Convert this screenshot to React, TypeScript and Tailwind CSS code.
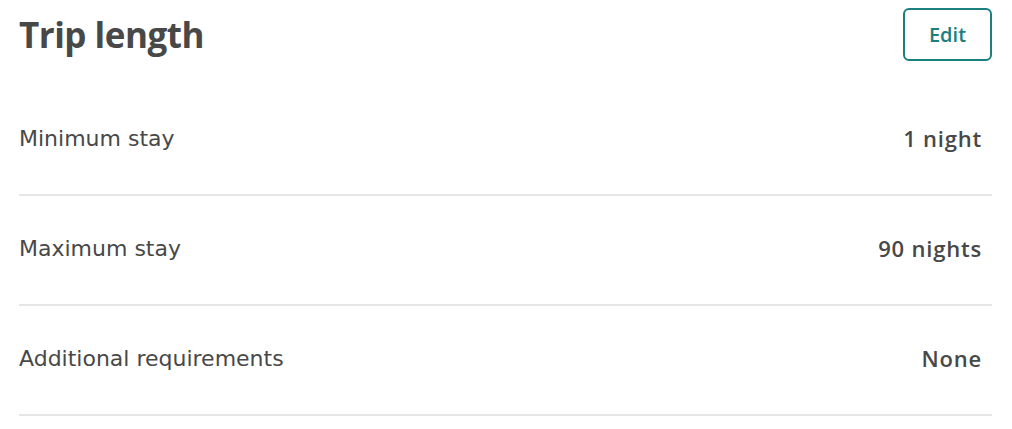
import React from "react";

const rows = [
  { label: "Minimum stay", value: "1 night" },
  { label: "Maximum stay", value: "90 nights" },
  { label: "Additional requirements", value: "None" },
];

export default function App() {
  return (
    <div
      className="w-[1012px] h-[429px] bg-white text-[#484848] overflow-hidden"
      style={{ fontFamily: '"Open Sans", "Liberation Sans", sans-serif' }}
    >
      <div className="pl-[19px] pr-[20px] pt-[8px]">
        <div className="flex items-center justify-between">
          <h1 className="text-[35px] font-bold leading-[53px] tracking-[-0.5px]">
            Trip length
          </h1>
          <button className="h-[53px] w-[89px] rounded-[6px] border-2 border-[#1b7f80] text-[#1b7f80] text-[20px] font-semibold">
            Edit
          </button>
        </div>
        <div className="mt-[25px]">
          {rows.map((r) => (
            <div
              key={r.label}
              className="h-[110px] flex items-center justify-between border-b-2 border-[#e6e6e6] pr-[10px] pb-[3px]"
            >
              <span
                className="text-[22px]"
                style={{ fontFamily: '"DejaVu Sans", sans-serif' }}
              >
                {r.label}
              </span>
              <span className="text-[22px] font-semibold tracking-[0.8px]">{r.value}</span>
            </div>
          ))}
        </div>
      </div>
    </div>
  );
}
